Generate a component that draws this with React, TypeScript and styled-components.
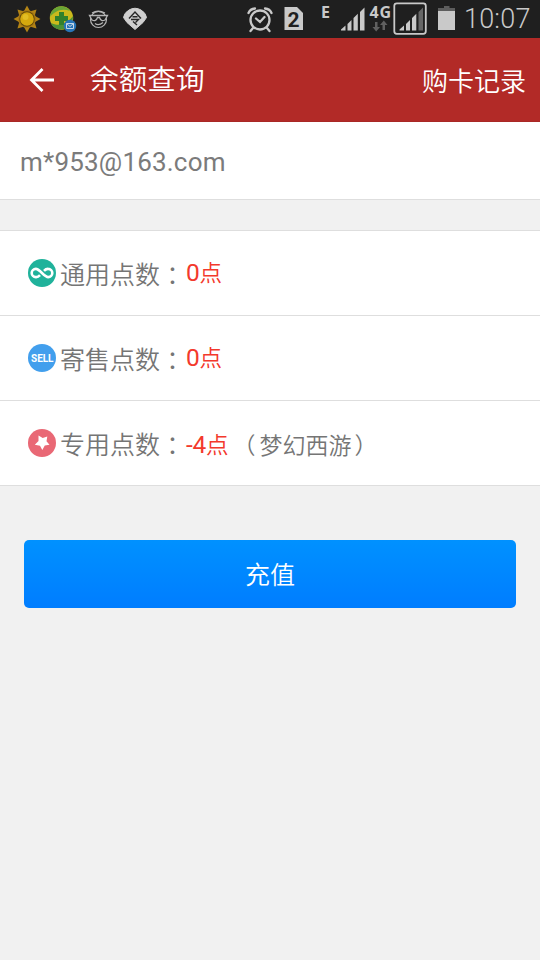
import React from 'react';
import styled, { createGlobalStyle } from 'styled-components';

const GlobalStyle = createGlobalStyle`
  * { box-sizing: border-box; }
  body {
    margin: 0;
    background: #f1f1f1;
    font-family: Roboto, "Noto Sans CJK TC", "Noto Sans CJK SC", sans-serif;
  }
`;

const Screen = styled.div`
  width: 540px;
  height: 960px;
  display: flex;
  flex-direction: column;
  background: #f1f1f1;
  overflow: hidden;
`;

const StatusBar = styled.div`
  height: 38px;
  display: flex;
  background: #1f1f1f;
  color: #c9c9c9;
`;

const StatusIcon = styled.svg<{ $gap: number }>`
  flex: none;
  display: block;
  margin-left: ${(p) => p.$gap}px;
`;

const Clock = styled.div`
  margin-left: 7px;
  font-size: 27px;
  font-weight: 350;
  line-height: 38px;
  letter-spacing: 0.2px;
  white-space: nowrap;
`;

const TitleBar = styled.header`
  height: 84px;
  display: flex;
  align-items: center;
  padding: 0 14px 0 28px;
  background: #b22a27;
  border-bottom: 1px solid #a92825;
  color: #fff;
`;

const BackButton = styled.button`
  width: 28px;
  height: 28px;
  padding: 0;
  border: 0;
  background: none;
  color: inherit;
`;

const Title = styled.h1`
  flex: 1;
  margin: 0 0 4px 34px;
  font: 350 28.7px/40px "Noto Sans CJK SC", sans-serif;
`;

const HistoryLink = styled.span`
  font: 350 26px/40px "Noto Sans CJK SC", sans-serif;
`;

const Account = styled.div`
  height: 78px;
  padding-left: 20px;
  background: #fff;
  border-bottom: 1px solid #dedede;
  font-size: 26px;
  line-height: 80px;
  letter-spacing: 0.2px;
  color: #7b7b7b;
`;

const PointsList = styled.div`
  margin-top: 30px;
  border-top: 1px solid #dedede;
`;

const PointsRow = styled.div`
  height: 85px;
  display: flex;
  align-items: center;
  padding-left: 28px;
  background: #fff;
  border-bottom: 1px solid #dedede;
  color: #757575;
`;

const RowIcon = styled.svg`
  flex: none;
  width: 28px;
  height: 28px;
  margin-right: 4px;
`;

const Label = styled.span`
  font: 350 25px/36px "Noto Sans CJK SC", sans-serif;
`;

const Colon = styled.span`
  width: 26px;
  padding-top: 2px;
  font: 350 25px/36px "Noto Sans CJK TC", sans-serif;
`;

const Value = styled.span<{ $shift?: number }>`
  font: 350 22.5px/36px Roboto, "Noto Sans CJK SC", sans-serif;
  color: #f3392c;
  padding-top: ${(p) => p.$shift ?? 0}px;
`;

const Digits = styled.span<{ $tight?: boolean }>`
  font-size: 24.5px;
  font-weight: 400;
  letter-spacing: ${(p) => (p.$tight ? -0.3 : -0.2)}px;
`;

const Game = styled.span`
  margin-left: 8px;
  padding-top: 1px;
  font: 350 23px/36px "Noto Sans CJK SC", sans-serif;
`;

const OpenParen = styled.span`
  margin: 0 4px 0 -4px;
`;

const CloseParen = styled.span`
  margin-left: 3px;
`;

const RechargeButton = styled.button`
  height: 68px;
  margin: 54px 24px 0;
  padding: 0 0 2px;
  border: 0;
  border-radius: 5px;
  background: linear-gradient(#0091ff, #007dff);
  color: #fff;
  font: 350 25px/66px "Noto Sans CJK SC", sans-serif;
`;

const SignalBars = ({ x = 0, y = 0, dim = false }) => (
  <g transform={`translate(${x} ${y})`} fill="#c9c9c9">
    <path d="M0 23V22L4.500 18V23Z M6.500 23V16.500L10.500 12.500V23Z M12.500 23V10.500L16.800 6.300V23Z" />
    <path d="M19 23V4.500L23.500 0V23Z" fill={dim ? '#666' : '#c9c9c9'} />
  </g>
);

const StatusIcons = () => (
  <>
    <StatusIcon $gap={13} width="28" height="38" viewBox="13 0 28 38">
      <g fill="#b38416">
        {[0, 45, 90, 135, 180, 225, 270, 315].map((a) => (
          <path key={a} d="M24 11L27 5.500L30 11Z" transform={`rotate(${a} 27 19)`} />
        ))}
      </g>
      <circle cx="27" cy="19" r="9" fill="#a97914" />
      <circle cx="27" cy="19" r="7.700" fill="#624809" />
      <circle cx="27" cy="19" r="6.800" fill="#d5a80e" />
      <circle cx="25.500" cy="17" r="3" fill="#e2bd24" />
    </StatusIcon>
    <StatusIcon $gap={8} width="28" height="38" viewBox="49 0 28 38">
      <circle cx="61.500" cy="18" r="11.700" fill="#cbb91c" />
      <path d="M50 17C51 9 57 6 63 6.400C67 7 69 9 70 11C62 8 55 11 50 17Z" fill="#69a536" />
      <path d="M51 23C59 27 67 24 73 16C73 25 67 30 60 29.500C55 29 52 26 51 23Z" fill="#4c9137" />
      <path d="M59 12h5v4h4v5h-4v4h-5v-4h-4v-5h4Z" fill="#32802c" />
      <circle cx="70" cy="26" r="6.200" fill="#2774b7" />
      <path d="M66.500 23.500h7v5h-7z M66.500 23.500l3.500 3l3.500-3" fill="none" stroke="#c3d6e6" />
    </StatusIcon>
    <StatusIcon $gap={11} width="22" height="38" viewBox="88 0 22 38">
      <circle cx="98.500" cy="19.500" r="8" fill="none" stroke="#b5b5b5" strokeWidth="1.200" />
      <path d="M89.500 15.500H107.500L105 20Q101 22 99.500 17.500H97.500Q96 22 92 20Z" fill="#1f1f1f" stroke="#b5b5b5" strokeWidth="1.300" />
      <path d="M92 13Q98 9.500 105 13M95 23.500Q98.500 26 103 22.500" fill="none" stroke="#b5b5b5" strokeWidth="1.300" />
    </StatusIcon>
    <StatusIcon $gap={12} width="26" height="38" viewBox="122 0 26 38">
      <path d="M123.500 17.500Q124 13 129 10Q135 6.500 141 10Q146 13 146.500 17.500L143 22.500L135 29.500L127 22.500Z" fill="#cfcfcf" stroke="#cfcfcf" strokeLinejoin="round" />
      <path d="M129 18.500L135 12L141 18.500M132.500 16.700H137.500M131 19.500H138.500L135.500 22.500M133 21.500L137 25" fill="none" stroke="#272727" strokeWidth="1.400" />
    </StatusIcon>
    <StatusIcon $gap={98} width="28" height="38" viewBox="246 0 28 38">
      <g fill="none" stroke="#c9c9c9" strokeWidth="2.300" strokeLinecap="round">
        <circle cx="260" cy="20" r="9.500" />
        <path d="M248.500 13Q250 9 255 8.500M271.500 13Q270 9 265 8.500M253 28L250.500 31M267 28L269.500 31M256 18.500L260 22L264.500 17" />
      </g>
    </StatusIcon>
    <StatusIcon $gap={9} width="22" height="38" viewBox="283 0 22 38">
      <path d="M284.500 7H297L303 13V30H284.500Z" fill="#c9c9c9" />
      <text x="293.600" y="26.500" textAnchor="middle" fontFamily="Roboto" fontWeight="700" fontSize="21" fill="#1f1f1f">2</text>
    </StatusIcon>
    <StatusIcon $gap={14} width="14" height="38" viewBox="319 0 14 38">
      <text x="321" y="17.800" fontFamily="Noto Sans" fontWeight="700" fontSize="16" fill="#c9c9c9">E</text>
    </StatusIcon>
    <StatusIcon $gap={8} width="25" height="38" viewBox="341 0 25 38">
      <SignalBars x={341} y={7.5} />
    </StatusIcon>
    <StatusIcon $gap={3} width="23" height="38" viewBox="369 0 23 38">
      <text x="369.500" y="18" fontFamily="Noto Sans" fontWeight="700" fontSize="16" textLength="21.500" fill="#c9c9c9">4G</text>
      <path d="M375 22h2.500v5h2.500l-3.800 4.500l-3.700-4.500h2.500zM382.500 30h2.500v-5h2.500l-3.700-4.500l-3.800 4.500h2.500z" fill="#606060" />
    </StatusIcon>
    <StatusIcon $gap={1} width="35" height="38" viewBox="393 0 35 38">
      <rect x="394.300" y="3.300" width="31.500" height="30.500" rx="2.500" fill="none" stroke="#c9c9c9" strokeWidth="1.800" />
      <SignalBars x={399.5} y={7.5} dim />
    </StatusIcon>
    <StatusIcon $gap={9} width="20" height="38" viewBox="437 0 20 38">
      <path d="M444 6H449.500V8H455V12H438V8H444Z" fill="#5d5d5d" />
      <path d="M438 11H455V30H438Z" fill="#c9c9c9" />
    </StatusIcon>
  </>
);

const InfinityIcon = () => (
  <RowIcon viewBox="0 0 28 28">
    <circle cx="14" cy="14" r="14" fill="#20b29b" />
    <path d="M12 16.200Q10 18.300 7.800 18.100A4.100 4.100 0 0 1 7.800 9.900C11.800 9.900 16.200 18.100 20.200 18.100A4.100 4.100 0 0 0 20.200 9.900Q18 9.700 16 11.800" fill="none" stroke="#fff" strokeWidth="2.600" />
  </RowIcon>
);

const SellIcon = () => (
  <RowIcon viewBox="0 0 28 28">
    <circle cx="14" cy="14" r="14" fill="#429fed" />
    <text x="3" y="17.900" textLength="22.500" fontFamily="Roboto" fontWeight="700" fontSize="10" fill="#fff">SELL</text>
  </RowIcon>
);

const StarIcon = () => (
  <RowIcon viewBox="0 0 28 28">
    <circle cx="14" cy="14" r="14" fill="#e96875" />
    <path d="M10.500 6.500L14.700 9L19.300 7.400L18.500 12.200L21.500 15.800L16.800 16.500L14.300 21L12 16.700L6.800 15.800L10.500 12Z" fill="#fff" />
  </RowIcon>
);

export default function App() {
  return (
    <Screen>
      <GlobalStyle />
      <StatusBar>
        <StatusIcons />
        <Clock>10:07</Clock>
      </StatusBar>
      <TitleBar>
        <BackButton aria-label="返回">
          <svg width="28" height="28" viewBox="0 0 28 28" fill="none" stroke="#fff" strokeWidth="2.800">
            <path d="M26 14H4M14.500 3L3.500 14L14.500 25" />
          </svg>
        </BackButton>
        <Title>余额查询</Title>
        <HistoryLink>购卡记录</HistoryLink>
      </TitleBar>
      <Account>m*953@163.com</Account>
      <PointsList>
        <PointsRow>
          <InfinityIcon />
          <Label>通用点数</Label>
          <Colon>：</Colon>
          <Value><Digits>0</Digits>点</Value>
        </PointsRow>
        <PointsRow>
          <SellIcon />
          <Label>寄售点数</Label>
          <Colon>：</Colon>
          <Value><Digits>0</Digits>点</Value>
        </PointsRow>
        <PointsRow>
          <StarIcon />
          <Label>专用点数</Label>
          <Colon>：</Colon>
          <Value $shift={3}><Digits $tight>-4</Digits>点</Value>
          <Game><OpenParen>（</OpenParen>梦幻西游<CloseParen>）</CloseParen></Game>
        </PointsRow>
      </PointsList>
      <RechargeButton>充值</RechargeButton>
    </Screen>
  );
}
